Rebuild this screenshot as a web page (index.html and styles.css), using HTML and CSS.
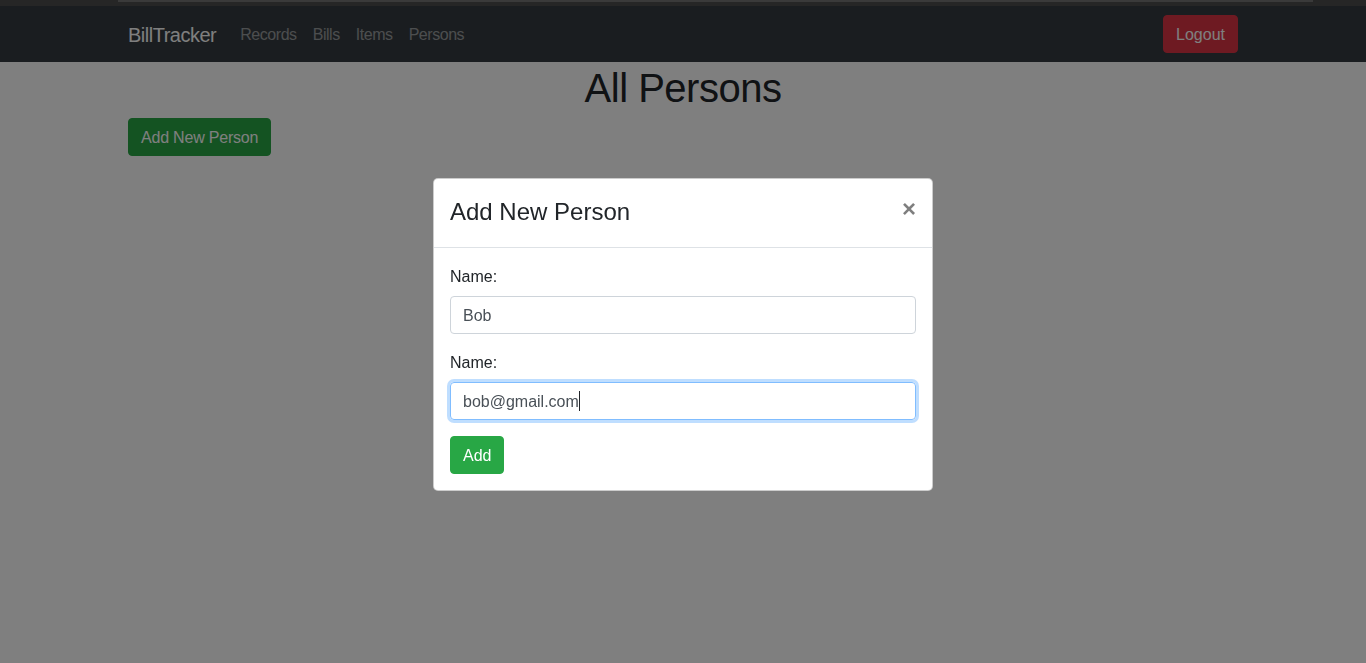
FILE: index.html
```html
<!DOCTYPE html>
<html lang="en">
<head>
<meta charset="utf-8">
<title>BillTracker - All Persons</title>
<link rel="stylesheet" href="styles.css">
</head>
<body>
<div class="chrome-strip"><div class="chrome-line"></div></div>
<nav class="navbar">
  <div class="container nav-inner">
    <a class="brand" href="#">BillTracker</a>
    <ul class="nav-links">
      <li><a class="nav-link" href="#">Records</a></li>
      <li><a class="nav-link" href="#">Bills</a></li>
      <li><a class="nav-link" href="#">Items</a></li>
      <li><a class="nav-link" href="#">Persons</a></li>
    </ul>
    <button class="btn btn-danger logout">Logout</button>
  </div>
</nav>
<main class="container">
  <h1 class="page-title">All Persons</h1>
  <button class="btn btn-success btn-new">Add New Person</button>
</main>

<div class="backdrop"></div>
<div class="modal">
  <div class="modal-content">
    <div class="modal-header">
      <h4 class="modal-title">Add New Person</h4>
      <button class="close">&times;</button>
    </div>
    <div class="modal-body">
      <div class="form-group">
        <label class="label">Name:</label>
        <div class="form-control">Bob</div>
      </div>
      <div class="form-group">
        <label class="label">Name:</label>
        <div class="form-control focused">bob@gmail.com<span class="caret"></span></div>
      </div>
      <button class="btn btn-success btn-add">Add</button>
    </div>
  </div>
</div>
</body>
</html>
```

FILE: styles.css
```css
* { box-sizing: border-box; }
html, body { margin: 0; padding: 0; }
body {
  font-family: "Liberation Sans", Arial, sans-serif;
  font-size: 16px;
  line-height: 1.5;
  color: #212529;
  background: #fff;
  height: 663px;
  overflow: hidden;
}
.chrome-strip {
  height: 6px;
  background: #4c4c4c;
}
.chrome-line {
  margin-left: 118px;
  width: 1195px;
  height: 2px;
  background: #747474;
}
.container {
  width: 1140px;
  margin: 0 auto;
  padding: 0 15px;
}
.navbar {
  background: #343a40;
  height: 56px;
  padding: 8px 0;
}
.nav-inner {
  display: flex;
  align-items: center;
  height: 40px;
}
.brand {
  font-size: 20px;
  line-height: 30px;
  padding-top: 2px;
  color: #fff;
  text-decoration: none;
  margin-right: 16px;
  letter-spacing: -0.5px;
}
.nav-links {
  display: flex;
  list-style: none;
  margin: 0;
  padding: 0;
}
.nav-link {
  display: block;
  padding: 9px 8px 7px;
  color: rgba(255, 255, 255, 0.5);
  text-decoration: none;
  letter-spacing: -0.45px;
}
.btn {
  font-family: inherit;
  font-size: 16px;
  line-height: 24px;
  padding: 7px 12px 5px;
  border: 1px solid transparent;
  border-radius: 4px;
  color: #fff;
  cursor: pointer;
}
.btn-danger { background: #dc3545; border-color: #dc3545; }
.btn-success { background: #28a745; border-color: #28a745; }
.logout { margin-left: auto; }
.btn-new { letter-spacing: -0.2px; }
.page-title {
  text-align: center;
  font-size: 40px;
  font-weight: 500;
  line-height: 1.2;
  margin: 0 0 6px;
  padding-top: 2px;
  letter-spacing: -0.5px;
}
.backdrop {
  position: fixed;
  inset: 0;
  background: rgba(0, 0, 0, 0.5);
}
.modal {
  position: fixed;
  inset: 0;
  display: flex;
  justify-content: center;
  align-items: flex-start;
  padding-top: 178px;
}
.modal-content {
  width: 500px;
  background: #fff;
  border: 1px solid rgba(0, 0, 0, 0.2);
  border-radius: 5px;
}
.modal-header {
  display: flex;
  align-items: flex-start;
  padding: 16px;
  border-bottom: 1px solid #dee2e6;
}
.modal-title {
  margin: 0;
  font-size: 24px;
  font-weight: 500;
  line-height: 1.5;
  position: relative;
  top: -1px;
}
.close {
  margin: -16px -16px -16px auto;
  padding: 18px 16px 14px;
  background: transparent;
  border: 0;
  font-family: inherit;
  font-size: 24px;
  font-weight: 700;
  line-height: 1;
  color: #000;
  opacity: 0.5;
}
.modal-body { padding: 16px; }
.form-group { margin-bottom: 16px; }
.label {
  display: inline-block;
  margin-bottom: 8px;
  padding-top: 1px;
  height: 24px;
}
.form-control {
  height: 38px;
  padding: 7px 12px 5px;
  border: 1px solid #ced4da;
  border-radius: 4px;
  color: #495057;
  line-height: 24px;
}
.form-control.focused {
  border-color: #80bdff;
  box-shadow: 0 0 0 3px rgba(0, 123, 255, 0.25);
}
.caret {
  display: inline-block;
  width: 1px;
  height: 20px;
  background: #212529;
  vertical-align: -4px;
}
.btn-add { display: block; }
```
